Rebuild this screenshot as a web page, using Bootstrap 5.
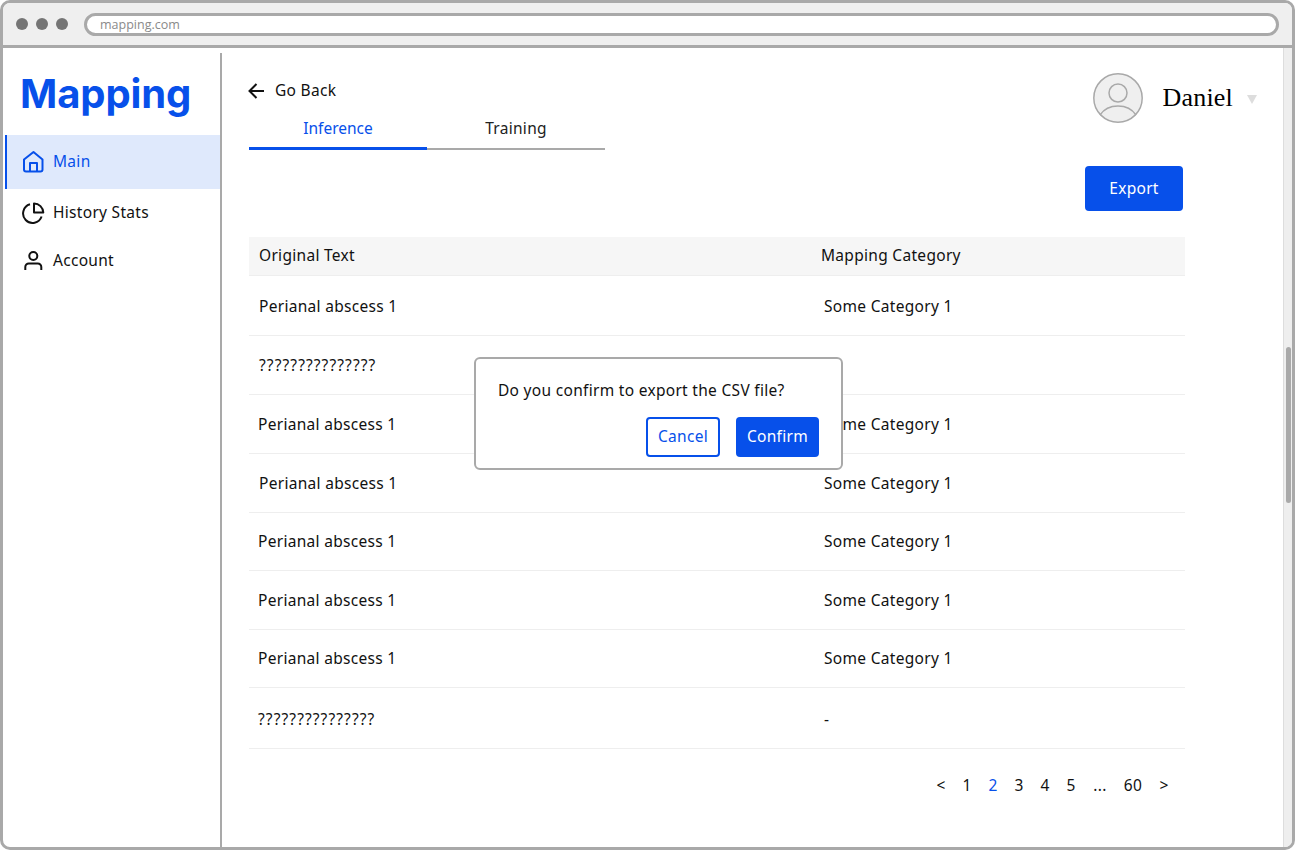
<!DOCTYPE html>
<html lang="en">
<head>
    <meta charset="UTF-8">
    <meta name="viewport" content="width=device-width, initial-scale=1">
    <title>Mapping - Inference</title>
    <link href="https://cdn.jsdelivr.net/npm/bootstrap@5.3.0/dist/css/bootstrap.min.css" rel="stylesheet">
    <style>
        html, body { height: 100%; overflow: hidden; }
        body { font-family: "Noto Sans", sans-serif; font-size: 15.5px; letter-spacing: .3px; color: #111; background: #fff; }
        .frame { height: 850px; border: 3px solid #a9a9a9; border-radius: 10px; overflow: hidden; }
        .chrome-bar { height: 45px; background: #efefef; border-bottom: 3px solid #a9a9a9; padding: 0 13px 0 13px; flex: none; }
        .dot { width: 12px; height: 12px; border-radius: 50%; background: #757575; }
        .url-box { height: 23px; margin-left: 16px; border: 3px solid #a9a9a9; border-radius: 12px; background: #fff; font-size: 12.5px; letter-spacing: 0; color: #8a8a8a; padding-left: 13px; line-height: 17px; font-family: "Open Sans", sans-serif; }
        .sidebar { width: 219px; flex: none; margin-top: 5px; border-right: 2px solid #a9a9a9; padding-left: 2px; }
        .logo { font-family: Inter, sans-serif; font-weight: 700; font-size: 40px; letter-spacing: -.1px; line-height: 48px; color: #0750ea; margin: 17px 0 17px 15px; }
        .side-link { display: flex; align-items: center; gap: 8px; padding-left: 14px; color: #111; text-decoration: none; border-left: 2px solid transparent; }
        .side-link.active { height: 54px; background: #dfe9fc; border-left-color: #0750ea; color: #0750ea; }
        .side-stats { height: 48px; }
        .side-account { height: 48px; }
        .main-area { width: 1061px; flex: none; padding: 0 26px 0 27px; }
        .scroll-track { width: 9px; flex: none; background: #eee; border-left: 1px solid #ddd; }
        .scroll-thumb { height: 156px; background: #a9a9a9; border-radius: 4px; margin: 299px 1px 0 2px; }
        .top-row { height: 102px; }
        .back-link { height: 24px; margin-top: 31px; margin-left: -1px; gap: 11px; color: #111; text-decoration: none; }
        .tab-row { width: 356px; margin-top: 15px; }
        .tab-item { width: 178px; height: 32px; text-align: center; line-height: 21px; color: #222; text-decoration: none; border-bottom: 2px solid #a9a9a9; }
        .tab-item.active { color: #0750ea; letter-spacing: 0; border-bottom: 3px solid #0750ea; }
        .profile { margin-top: 25px; height: 50px; }
        .user-name { font-family: "Liberation Serif", serif; font-size: 26px; letter-spacing: .2px; margin: -2px 0 0 19px; color: #000; }
        .caret-down { width: 0; height: 0; margin: 2px 0 0 14px; border-left: 5px solid transparent; border-right: 5px solid transparent; border-top: 9px solid #ddd; }
        .content-wrap { width: 936px; }
        .btn-export { width: 98px; height: 45px; padding: 0; background: #0750ea; color: #fff; border-radius: 4px; margin: 16px 2px 26px 0; font-size: 15.5px; letter-spacing: .3px; }
        .map-table { margin: 0; }
        .map-table th, .map-table td { padding: 2px 0 0 10px; vertical-align: middle; font-weight: 400; color: #111; border-bottom: 1px solid #eee; box-shadow: none; background: transparent; }
        .map-table th { height: 38px; padding: 0 0 1px 10px; background: #f6f6f6; }
        .map-table th.col-cat { padding-left: 0; }
        .col-text { width: 572px; }
        .map-table td.cat-cell { padding-left: 3px; }
        .map-table td.text-left { padding-left: 9px; }
        .map-table tr.tall-text td { padding-top: 4px; }
        .qmarks { letter-spacing: 1.1px; }
        .row-60 { height: 60px; }
        .row-59 { height: 59px; }
        .row-58 { height: 58px; }
        .row-61 { height: 61px; }
        .pager { margin: 26px 7px 0 0; padding: 0; list-style: none; line-height: 20px; }
        .pager li { width: 26px; text-align: center; }
        .pager li.active { color: #0750ea; }
        .pager li.gap-item { width: 32px; }
        .pager li.last-num { width: 34px; }
        .pager li.next-item { width: 28px; }
        .main-wrap { position: relative; }
        .confirm-box { position: absolute; left: 471px; top: 309px; width: 369px; height: 113px; background: #fff; border: 2px solid #a9a9a9; border-radius: 6px; padding: 20px 22px 0; }
        .confirm-box p { line-height: 22px; margin-bottom: 16px; }
        .btn-cancel { width: 74px; height: 40px; padding: 0; border: 2px solid #0750ea; color: #0750ea; background: #fff; border-radius: 4px; font-size: 15.5px; letter-spacing: .3px; }
        .btn-confirm { width: 83px; height: 40px; padding: 0; background: #0750ea; color: #fff; border-radius: 4px; font-size: 15.5px; letter-spacing: .3px; }
    </style>
</head>
<body>
    <div class="frame d-flex flex-column">
        <!-- browser bar -->
        <div class="chrome-bar d-flex align-items-center">
            <div class="d-flex gap-2">
                <span class="dot"></span><span class="dot"></span><span class="dot"></span>
            </div>
            <div class="url-box flex-grow-1">mapping.com</div>
        </div>

        <div class="d-flex flex-grow-1 main-wrap">
            <div class="sidebar">
                <div class="logo">Mapping</div>
                <a href="#" class="side-link active">
                    <svg width="24" height="24" viewBox="0 0 24 24" fill="none" stroke="currentColor" stroke-width="2" stroke-linejoin="round"><path d="M3 9.500 12.500 2l9 7.500v10a2 2 0 0 1-2 2H5a2 2 0 0 1-2-2z"/><path d="M9 21.500V13h7v8.500"/></svg>
                    <span>Main</span>
                </a>
                <a href="#" class="side-link side-stats">
                    <svg width="24" height="24" viewBox="0 0 24 24" fill="none" stroke="#111" stroke-width="2" stroke-linejoin="round"><path d="M9 3.300A9.500 9.500 0 1 0 20.600 15.500"/><path d="M13 2.500a9.300 9.300 0 0 1 9.300 9H13z"/></svg>
                    <span>History Stats</span>
                </a>
                <a href="#" class="side-link side-account">
                    <svg width="24" height="24" viewBox="0 0 24 24" fill="none" stroke="#111" stroke-width="2"><circle cx="12.300" cy="7" r="4"/><path d="M4.300 21v-3a3.500 3.500 0 0 1 3.500-3.500h9a3.500 3.500 0 0 1 3.500 3.500v3"/></svg>
                    <span>Account</span>
                </a>
            </div>

            <div class="main-area">
                <div class="top-row d-flex justify-content-between align-items-start">
                    <div>
                        <a href="#" class="back-link d-flex align-items-center">
                            <svg width="16" height="16" viewBox="0 0 16 16" fill="none" stroke="#111" stroke-width="2"><path d="M16 8H1.500M8.500 1 1.500 8l7 7"/></svg>
                            Go Back
                        </a>
                        <div class="tab-row d-flex">
                            <a href="#" class="tab-item active">Inference</a>
                            <a href="#" class="tab-item">Training</a>
                        </div>
                    </div>
                    <div class="profile d-flex align-items-center">
                        <svg width="50" height="50" viewBox="0 0 50 50" fill="#efefef" stroke="#a9a9a9" stroke-width="1.500"><circle cx="25" cy="25" r="24.200"/><circle cx="25" cy="20" r="9"/><path d="M7 42c4-6 10-9 18-9s14 3 18 9" fill="none"/></svg>
                        <span class="user-name">Daniel</span>
                        <span class="caret-down"></span>
                    </div>
                </div>

                <div class="content-wrap">
                    <div class="d-flex justify-content-end">
                        <button class="btn btn-export">Export</button>
                    </div>
                    <table class="table map-table">
                        <thead>
                            <tr><th class="col-text">Original Text</th><th class="col-cat">Mapping Category</th></tr>
                        </thead>
                        <tbody>
                            <tr class="row-60 tall-text"><td>Perianal abscess 1</td><td class="cat-cell">Some Category 1</td></tr>
                            <tr class="row-59"><td class="qmarks">???????????????</td><td class="cat-cell"></td></tr>
                            <tr class="row-59"><td class="text-left">Perianal abscess 1</td><td class="cat-cell">Some Category 1</td></tr>
                            <tr class="row-59"><td>Perianal abscess 1</td><td class="cat-cell">Some Category 1</td></tr>
                            <tr class="row-58"><td class="text-left">Perianal abscess 1</td><td class="cat-cell">Some Category 1</td></tr>
                            <tr class="row-59"><td class="text-left">Perianal abscess 1</td><td class="cat-cell">Some Category 1</td></tr>
                            <tr class="row-58"><td class="text-left">Perianal abscess 1</td><td class="cat-cell">Some Category 1</td></tr>
                            <tr class="row-61 tall-text"><td class="text-left qmarks">???????????????</td><td class="cat-cell">-</td></tr>
                        </tbody>
                    </table>
                    <ul class="pager d-flex justify-content-end">
                        <li>&lt;</li><li>1</li><li class="active">2</li><li>3</li><li>4</li><li>5</li>
                        <li class="gap-item">...</li><li class="last-num">60</li><li class="next-item">&gt;</li>
                    </ul>
                </div>
            </div>

            <div class="scroll-track"><div class="scroll-thumb"></div></div>

            <div class="confirm-box">
                <p>Do you confirm to export the CSV file?</p>
                <div class="d-flex justify-content-end gap-3">
                    <button class="btn btn-cancel">Cancel</button>
                    <button class="btn btn-confirm">Confirm</button>
                </div>
            </div>
        </div>
    </div>
    <script src="https://cdn.jsdelivr.net/npm/bootstrap@5.3.0/dist/js/bootstrap.bundle.min.js"></script>
</body>
</html>
